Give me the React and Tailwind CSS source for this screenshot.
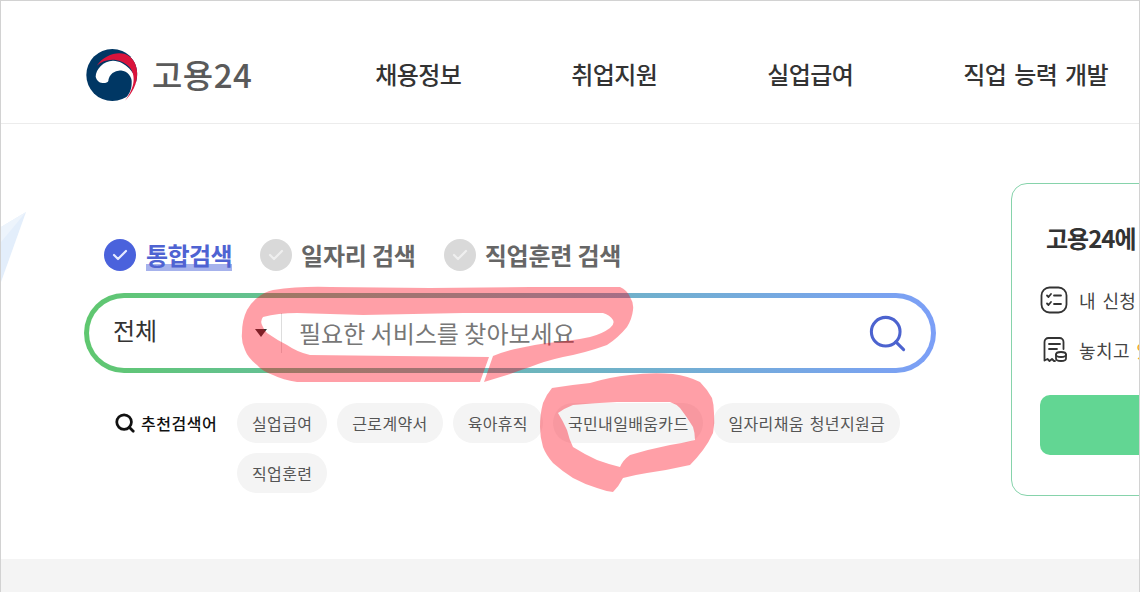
import React from 'react';
import { Search } from 'lucide-react';

const cjk = { fontFamily: '"Noto Sans CJK KR", "Noto Sans", sans-serif' };

const navItems = ['채용정보', '취업지원', '실업급여', '직업 능력 개발'];
const chips = ['실업급여', '근로계약서', '육아휴직', '국민내일배움카드', '일자리채움 청년지원금', '직업훈련'];

const Logo = () => (
  <svg width="65" height="62" viewBox="0 0 195 186" className="shrink-0">
    <circle cx="97" cy="90" r="78" fill="#003764" />
    <path d="M47 95C47 72 72 46 100 47C135 48 170 85 168 115C165 140 148 155 130 166C148 152 155 132 155 115A35 35 0 0 0 85 108C80 118 52 118 47 95Z" fill="#fff" />
    <path d="M150 35C180 60 182 120 135 167L200 168L200 30Z" fill="#fff" />
    <path d="M50 62C75 25 125 14 150 35C180 60 182 120 135 167C160 135 172 95 148 66C118 36 75 40 50 62Z" fill="#d9143c" />
  </svg>
);

const CheckDot = ({ active }) => (
  <span className={`flex h-8 w-8 shrink-0 items-center justify-center rounded-full ${active ? 'bg-[#4a62dc]' : 'bg-[#d9d9d9]'}`}>
    <svg width="16" height="12" viewBox="0 0 16 12" fill="none" stroke={active ? '#e6eaff' : '#efefef'} strokeWidth="2.2" strokeLinecap="round" strokeLinejoin="round">
      <path d="M2 6l4 4 8-8" />
    </svg>
  </span>
);

const ListIcon = () => (
  <svg width="28" height="28" viewBox="0 0 28 28" fill="none" stroke="#333" strokeWidth="1.8" strokeLinecap="round" strokeLinejoin="round" className="shrink-0">
    <rect x="1.5" y="1.5" width="25" height="25" rx="8" />
    <path d="M7 9.5l1.5 1.500 2.500-3M7 17.500l1.500 1.500 2.500-3M14 9.500h7M14 18h7" />
  </svg>
);

const ReceiptIcon = () => (
  <svg width="28" height="28" viewBox="0 0 28 28" fill="none" stroke="#333" strokeWidth="1.8" strokeLinecap="round" strokeLinejoin="round" className="shrink-0">
    <path d="M15 25h-1l-2-2-2.500 2-2-2-3 1.500V6a4 4 0 0 1 4-4h11a4 4 0 0 1 4 4v7" />
    <path d="M9 8h11M9 13h8" />
    <ellipse cx="21" cy="18.500" rx="5" ry="2.500" />
    <path d="M16 18.500v4c0 1.500 2.200 2.500 5 2.500s5-1 5-2.500v-4" />
  </svg>
);

export default function App() {
  return (
    <div className="relative flex h-[592px] w-[1140px] flex-col overflow-hidden border-x border-t border-[#d2d2d2] bg-white" style={cjk}>
      <header className="flex h-[123px] shrink-0 items-center border-b border-[#ececec] pl-[79px] pt-[28px]">
        <Logo />
        <span className="mb-[2px] ml-[7px] text-[33px] font-medium tracking-[0.5px] text-[#5a5a5a]">고용24</span>
        <nav className="mb-1 ml-[123px] flex gap-[110px] text-2xl font-medium tracking-[-0.58px] text-[#333] [word-spacing:3px]">
          {navItems.map((item) => (
            <a key={item} className="whitespace-nowrap">{item}</a>
          ))}
        </nav>
      </header>

      <main className="flex min-h-0 flex-1 overflow-hidden">
        <div className="ml-[83px] w-[852px] shrink-0 pt-[115px]">
          <div className="ml-5 flex h-8 items-center">
            <CheckDot active />
            <span className="relative ml-[10px] text-2xl font-bold leading-8 tracking-[-0.58px] text-[#4f63d2] underline decoration-[#a6b2ec] decoration-[7px] underline-offset-[-1px]">통합검색</span>
            <span className="ml-7"><CheckDot /></span>
            <span className="ml-[9px] text-2xl font-bold tracking-[-0.2px] text-[#666]">일자리 검색</span>
            <span className="ml-7"><CheckDot /></span>
            <span className="ml-[9px] text-2xl font-bold tracking-[-0.2px] text-[#666]">직업훈련 검색</span>
          </div>

          <div className="mt-[22px] h-20 rounded-full bg-gradient-to-r from-[#5fc76f] to-[#7c9ff7] p-[5px]">
            <div className="flex h-full items-center rounded-full bg-white pl-6 pr-[22px]">
              <span className="mb-[6px] w-[142px] text-2xl text-[#333]">전체</span>
              <span className="h-0 w-0 border-x-[6.500px] border-t-[8px] border-x-transparent border-t-[#333]" />
              <span className="ml-[14px] h-10 w-px bg-[#ddd]" />
              <span className="ml-[17px] flex-1 text-2xl text-[#777]">필요한 서비스를 찾아보세요</span>
              <Search size={43} strokeWidth={1.7} className="text-[#4c63cf]" />
            </div>
          </div>

          <div className="mt-[30px] flex items-start">
            <div className="ml-[30px] flex h-10 w-[123px] shrink-0 items-center gap-[5px] text-base font-medium tracking-[0.5px] text-[#111]">
              <Search size={22} strokeWidth={3} />
              <span>추천검색어</span>
            </div>
            <div className="flex flex-wrap gap-x-[10px] gap-y-[10px]">
              {chips.map((chip) => (
                <span key={chip} className="flex h-10 items-center rounded-full bg-[#f4f4f4] px-[15px] text-base tracking-[0.35px] text-[#555] [word-spacing:2px]">{chip}</span>
              ))}
            </div>
          </div>
        </div>

        <aside className="ml-[75px] mt-[59px] h-[313px] w-[340px] shrink-0 rounded-2xl border border-[#86d3ab] pl-[28px] pt-[38px]">
          <h2 className="ml-[6px] whitespace-nowrap text-2xl font-bold leading-8 tracking-[-1px] text-[#333]">고용24에 로그인하세요</h2>
          <div className="mt-[32px] flex h-7 items-center gap-[11px] whitespace-nowrap text-lg tracking-[0.4px] text-[#444] [word-spacing:2px]">
            <ListIcon />
            <span>내 신청 내역 확인</span>
          </div>
          <div className="mt-[22px] flex h-7 items-center gap-[11px] whitespace-nowrap text-lg tracking-[0.4px] text-[#444] [word-spacing:2px]">
            <ReceiptIcon />
            <span>놓치고 <span className="text-[#f5a623]">있는 혜택</span></span>
          </div>
          <div className="mt-[31px] h-[60px] rounded-[10px] bg-[#62d693]" />
        </aside>
      </main>

      <div className="h-[33px] shrink-0 bg-[#f4f4f4]" />

      {/* paper plane behind the tabs */}
      <svg className="pointer-events-none absolute left-0 top-[210px]" width="26" height="72" viewBox="0 0 26 72">
        <path d="M25 1L0 16V71Z" fill="#e3eefb" />
        <path d="M25 1L0 16V31Z" fill="#edf4fc" />
      </svg>

      {/* hand drawn highlighter marks */}
      <svg className="pointer-events-none absolute left-0 top-0" width="1138" height="591" viewBox="1 1 1138 591">
        <path
          fill="#ff0014"
          fillOpacity="0.375"
          d="M480 382L430 382L363 382L297 382Q283 380 273 375Q262 371 257 365Q248 358 245 350Q241 342 242 333Q242 320 247 310Q251 303 257 298Q264 292 273 290Q300 286 330 287L430 288L530 287L620 287Q627 290 630 297Q634 303 633 310Q632 319 627 327Q618 338 607 345Q585 353 563 357Q545 361 530 367Q518 371 507 375L484 382L493 356Q505 351 520 348Q533 345 547 343Q570 341 590 337Q602 334 610 328Q615 324 613 320Q610 315 603 313L463 313L363 315L297 313Q278 313 263 317Q260 321 262 325Q264 330 267 333Q277 340 287 345Q297 352 310 355L397 356L489 357Z"
        />
        <path
          fill="#ff0014"
          fillOpacity="0.375"
          fillRule="evenodd"
          d="M613 492Q605 491 597 488Q584 484 573 478Q562 471 553 463Q546 455 543 447Q540 437 540 427Q540 414 543 403Q546 395 552 388Q570 385 590 383Q610 377 630 375Q652 372 673 374Q688 376 700 382Q707 389 712 398Q714 405 714 413Q715 423 713 433Q709 442 703 450Q697 458 690 465Q668 470 647 473Q634 475 623 478Q619 486 613 492ZM620 467Q608 464 597 460Q584 454 573 447Q569 439 567 430Q563 421 558 413Q565 408 573 405Q595 403 617 402L670 402Q676 404 680 408Q687 417 693 427Q695 433 695 440Q683 443 670 445Q650 449 630 455Q623 460 620 467Z"
        />
      </svg>
    </div>
  );
}
